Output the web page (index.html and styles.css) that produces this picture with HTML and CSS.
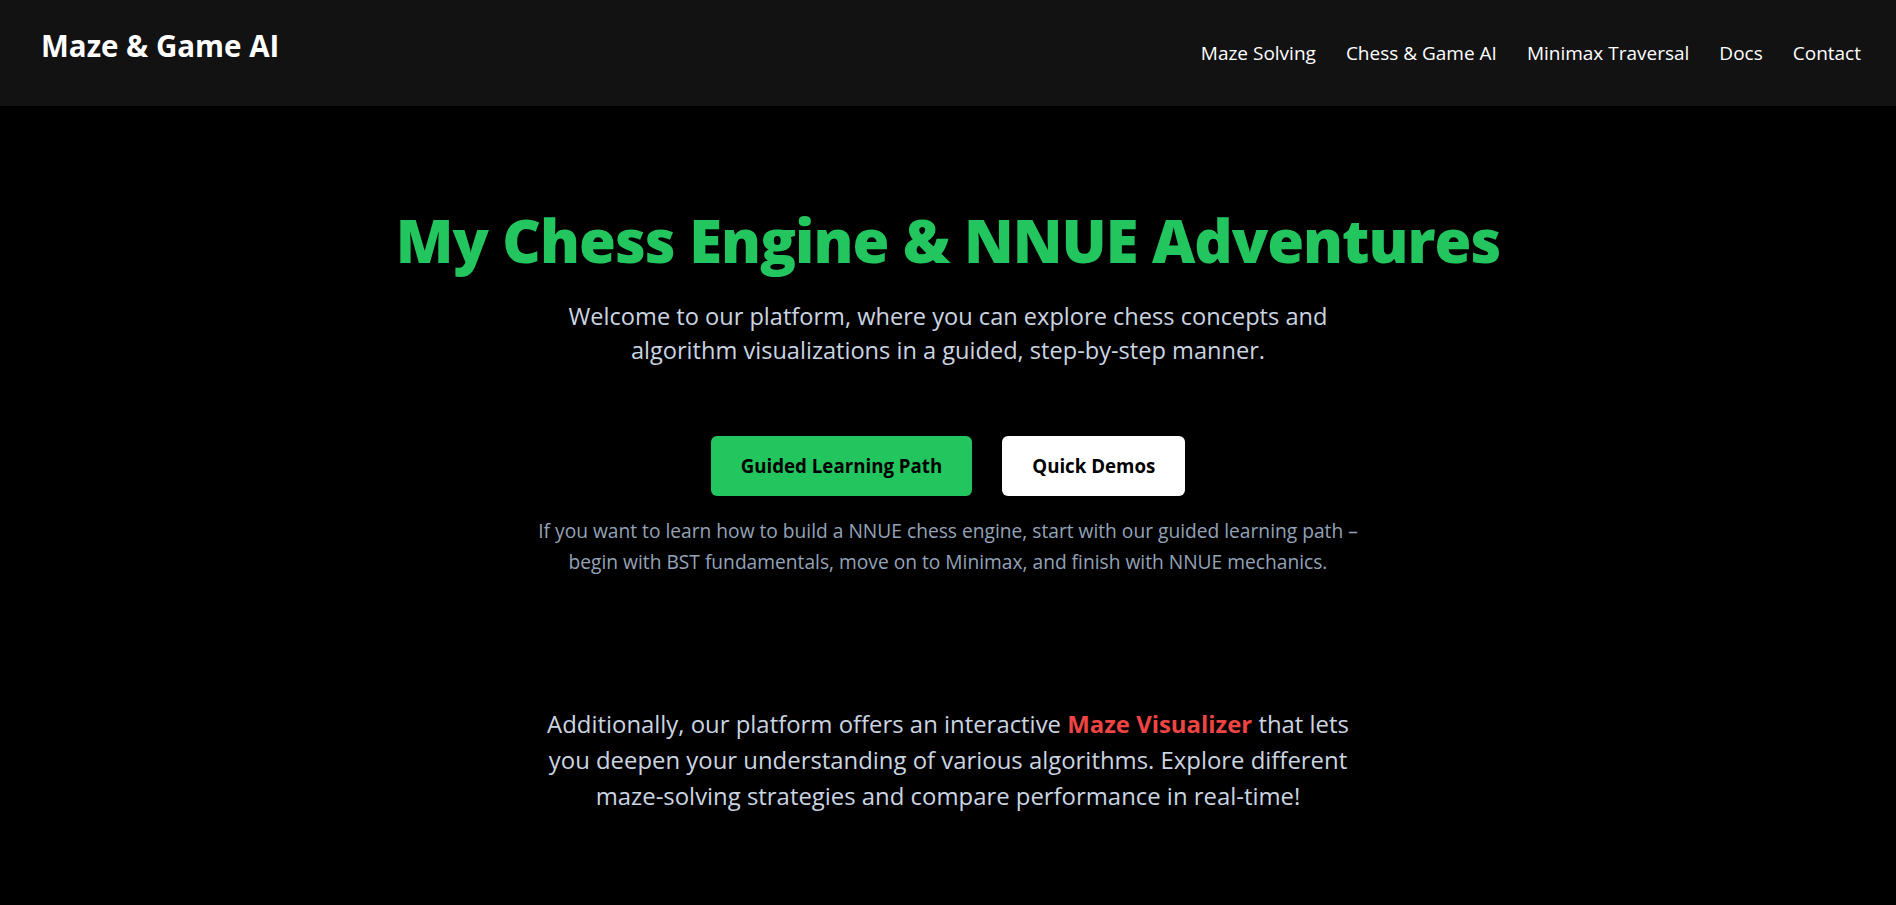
FILE: index.html
```html
<!DOCTYPE html>
<html lang="en">
<head>
<meta charset="utf-8">
<title>Maze &amp; Game AI</title>
<link rel="stylesheet" href="styles.css">
</head>
<body>
<header class="topbar">
  <a class="brand" href="#">Maze &amp; Game AI</a>
  <nav class="nav">
    <a href="#">Maze Solving</a>
    <a href="#">Chess &amp; Game AI</a>
    <a href="#">Minimax Traversal</a>
    <a href="#">Docs</a>
    <a href="#">Contact</a>
  </nav>
</header>
<main class="hero">
  <h1 class="hero-title">My Chess Engine &amp; NNUE Adventures</h1>
  <p class="hero-lead">Welcome to our platform, where you can explore chess concepts and<br>algorithm visualizations in a guided, step-by-step manner.</p>
  <div class="actions">
    <a class="btn btn-green" href="#">Guided Learning Path</a>
    <a class="btn btn-white" href="#">Quick Demos</a>
  </div>
  <p class="hero-note">If you want to learn how to build a NNUE chess engine, start with our guided learning path –<br>begin with BST fundamentals, move on to Minimax, and finish with NNUE mechanics.</p>
  <p class="hero-extra">Additionally, our platform offers an interactive <strong class="accent">Maze Visualizer</strong> that lets<br>you deepen your understanding of various algorithms. Explore different<br>maze-solving strategies and compare performance in real-time!</p>
</main>
</body>
</html>
```
FILE: styles.css
```css
* { box-sizing: border-box; }
html, body {
  margin: 0;
  padding: 0;
  background: #000;
  color: #fff;
  font-family: "Open Sans", "Noto Sans", sans-serif;
}
a { text-decoration: none; color: inherit; }

.topbar {
  height: 106px;
  background: #121212;
  display: flex;
  align-items: center;
  justify-content: space-between;
  padding: 0 35px 0 41px;
}
.brand {
  font-size: 29.5px;
  font-weight: 700;
  color: #fff;
  line-height: 1.2;
  margin-top: -14px;
}
.nav {
  display: flex;
  gap: 30px;
  font-size: 19px;
  color: #fff;
}

.hero {
  display: flex;
  flex-direction: column;
  align-items: center;
  text-align: center;
  padding-top: 98px;
}
.hero-title {
  margin: 0;
  font-size: 59.7px;
  line-height: 1.2;
  font-weight: 800;
  letter-spacing: -1px;
  color: #22c55e;
}
.hero-lead {
  margin: 23px 0 0;
  font-size: 23.6px;
  line-height: 34px;
  color: #cbd5e1;
}
.actions {
  display: flex;
  gap: 30px;
  margin-top: 69px;
}
.btn {
  display: inline-block;
  height: 60px;
  padding: 15px 30px;
  font-size: 18.7px;
  line-height: 30px;
  font-weight: 700;
  border-radius: 6px;
  color: #000;
}
.btn-green { background: #22c55e; }
.btn-white { background: #fff; }
.hero-note {
  margin: 19px 0 0;
  font-size: 19.2px;
  line-height: 31.4px;
  color: #94a3b8;
}
.hero-extra {
  margin: 129px 0 0;
  font-size: 23.9px;
  line-height: 36px;
  color: #cbd5e1;
}
.accent {
  color: #ef4444;
  font-weight: 700;
}
```
